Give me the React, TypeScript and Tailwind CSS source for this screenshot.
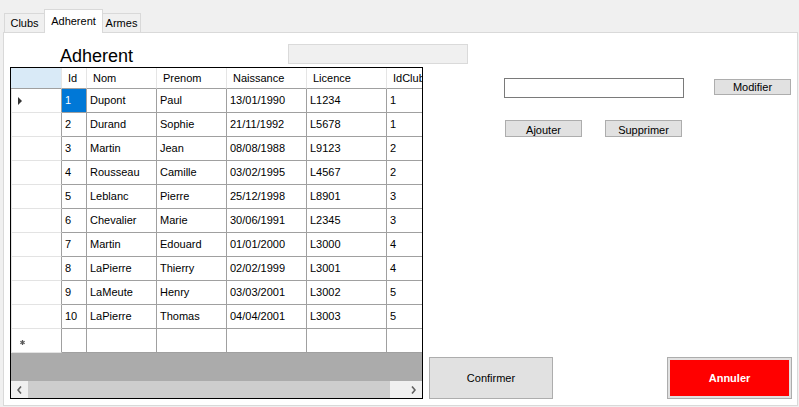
type Adherent = {
  id: number;
  nom: string;
  prenom: string;
  naissance: string;
  licence: string;
  idClub: number;
};

const adherents: Adherent[] = [
  { id: 1, nom: "Dupont", prenom: "Paul", naissance: "13/01/1990", licence: "L1234", idClub: 1 },
  { id: 2, nom: "Durand", prenom: "Sophie", naissance: "21/11/1992", licence: "L5678", idClub: 1 },
  { id: 3, nom: "Martin", prenom: "Jean", naissance: "08/08/1988", licence: "L9123", idClub: 2 },
  { id: 4, nom: "Rousseau", prenom: "Camille", naissance: "03/02/1995", licence: "L4567", idClub: 2 },
  { id: 5, nom: "Leblanc", prenom: "Pierre", naissance: "25/12/1998", licence: "L8901", idClub: 3 },
  { id: 6, nom: "Chevalier", prenom: "Marie", naissance: "30/06/1991", licence: "L2345", idClub: 3 },
  { id: 7, nom: "Martin", prenom: "Edouard", naissance: "01/01/2000", licence: "L3000", idClub: 4 },
  { id: 8, nom: "LaPierre", prenom: "Thierry", naissance: "02/02/1999", licence: "L3001", idClub: 4 },
  { id: 9, nom: "LaMeute", prenom: "Henry", naissance: "03/03/2001", licence: "L3002", idClub: 5 },
  { id: 10, nom: "LaPierre", prenom: "Thomas", naissance: "04/04/2001", licence: "L3003", idClub: 5 },
];

const headers = ["Id", "Nom", "Prenom", "Naissance", "Licence", "IdClub"];
const colWidths = ["w-[25px]", "w-[70px]", "w-[70px]", "w-[80px]", "w-[80px]", "w-[80px]"];

const rowHeaderCell =
  "w-[51px] shrink-0 h-full border-l border-l-[#e3e3e3] border-r border-r-[#a0a0a0] border-b border-b-[#e3e3e3] flex items-center pl-[6px]";
const dataCell =
  "shrink-0 h-full border-r border-b border-[#a0a0a0] flex items-center pl-[3px] overflow-hidden whitespace-nowrap";

function Chevron({ dir }: { dir: "left" | "right" }) {
  return (
    <svg width="5" height="8" viewBox="0 0 5 8">
      <polyline
        points={dir === "left" ? "4,0.5 1,4 4,7.5" : "1,0.5 4,4 1,7.5"}
        fill="none"
        stroke="#606060"
        strokeWidth="1.6"
      />
    </svg>
  );
}

function DataGrid() {
  return (
    <div className="ml-[6px] w-[413px] h-[332px] shrink-0 border border-black flex flex-col overflow-hidden bg-white">
      <div className="flex h-[21px] shrink-0">
        <div className="w-[51px] shrink-0 h-full bg-[#d9eaf7] border-b border-b-[#a0a0a0] border-r border-r-[#e5e5e5]" />
        {headers.map((h, i) => (
          <div
            key={h}
            className={`${colWidths[i]} shrink-0 h-full border-r border-r-[#e5e5e5] border-b border-b-[#a0a0a0] flex items-center pl-[6px] whitespace-nowrap`}
          >
            {h}
          </div>
        ))}
      </div>

      {adherents.map((a, r) => {
        const values = [a.id, a.nom, a.prenom, a.naissance, a.licence, a.idClub];
        return (
          <div key={a.id} className="flex h-[24px] shrink-0">
            <div className={rowHeaderCell}>
              {r === 0 && (
                <svg width="4" height="8" viewBox="0 0 4 8">
                  <polygon points="0,0 4,4 0,8" fill="#333333" />
                </svg>
              )}
            </div>
            {values.map((v, i) => (
              <div
                key={i}
                className={`${dataCell} ${colWidths[i]} ${
                  r === 0 && i === 0 ? "bg-[#0078d7] text-white" : ""
                }`}
              >
                {v}
              </div>
            ))}
          </div>
        );
      })}

      <div className="flex h-[24px] shrink-0">
        <div className={rowHeaderCell}>
          <svg width="5" height="5" viewBox="0 0 5 5" className="ml-[2px] mt-[3px]">
            <g stroke="#5a5a5a" strokeWidth="1.3">
              <line x1="2.5" y1="0" x2="2.5" y2="5" />
              <line x1="0.3" y1="1.2" x2="4.7" y2="3.8" />
              <line x1="0.3" y1="3.8" x2="4.7" y2="1.2" />
            </g>
          </svg>
        </div>
        {colWidths.map((w, i) => (
          <div key={i} className={`${dataCell} ${w}`} />
        ))}
      </div>

      <div className="h-[28px] shrink-0 bg-[#ababab]" />

      <div className="h-[17px] shrink-0 bg-[#f0f0f0] flex">
        <div className="w-[17px] h-full flex items-center justify-center">
          <Chevron dir="left" />
        </div>
        <div className="w-[362px] h-full bg-[#cdcdcd]" />
        <div className="flex-1" />
        <div className="w-[17px] h-full flex items-center justify-center">
          <Chevron dir="right" />
        </div>
      </div>
    </div>
  );
}

export default function App() {
  return (
    <div className="w-[799px] h-[407px] overflow-hidden bg-[#f0f0f0] text-[11px] text-black font-['Liberation_Sans',Arial,sans-serif]">
      <div className="h-[32px] flex items-end pl-[4px]">
        <div className="w-[40px] h-[19px] border-l border-t border-[#d9d9d9] bg-[#f0f0f0] flex justify-center pt-[3px] leading-[13px]">
          Clubs
        </div>
        <div className="relative z-10 -mb-px w-[59px] h-[24px] border-l border-t border-r border-[#d9d9d9] bg-white flex justify-center pt-[5px] leading-[13px]">
          Adherent
        </div>
        <div className="w-[38px] h-[19px] border-t border-r border-[#d9d9d9] bg-[#f0f0f0] flex justify-center pt-[3px] leading-[13px]">
          Armes
        </div>
      </div>

      <div className="ml-[3px] w-[795px] h-[374px] border border-[#d9d9d9] bg-white flex flex-col">
        <div className="h-[34px] shrink-0 flex items-start">
          <div className="ml-[56px] w-[228px] mt-[14px] text-[18px] leading-[18px]">Adherent</div>
          <div className="mt-[11px] w-[180px] h-[20px] border border-[#dadada] bg-[#f0f0f0]" />
        </div>

        <div className="flex flex-1">
          <DataGrid />

          <div className="flex flex-col flex-1">
            <div className="mt-[11px] flex items-start">
              <div className="ml-[81px] w-[180px] h-[20px] border border-[#7a7a7a] bg-white" />
              <button className="ml-[30px] mt-[1px] w-[77px] h-[16px] border border-[#adadad] bg-[#e1e1e1] flex items-center justify-center leading-none">
                Modifier
              </button>
            </div>

            <div className="mt-[22px] flex">
              <button className="ml-[82px] w-[77px] h-[17px] border border-[#adadad] bg-[#e1e1e1] overflow-hidden pt-[3px] leading-[11px] text-center">
                Ajouter
              </button>
              <button className="ml-[23px] w-[77px] h-[17px] border border-[#adadad] bg-[#e1e1e1] overflow-hidden pt-[3px] leading-[11px] text-center">
                Supprimer
              </button>
            </div>

            <div className="mt-auto mb-[6px] flex">
              <button className="ml-[6px] w-[124px] h-[42px] border border-[#adadad] bg-[#e1e1e1] flex items-center justify-center">
                Confirmer
              </button>
              <div className="ml-[114px] w-[125px] h-[42px] border border-[#adadad] bg-[#e1e1e1] p-[2px]">
                <div className="w-full h-full bg-[#ff0000] flex items-center justify-center text-white font-bold">
                  Annuler
                </div>
              </div>
            </div>
          </div>
        </div>
      </div>
    </div>
  );
}
